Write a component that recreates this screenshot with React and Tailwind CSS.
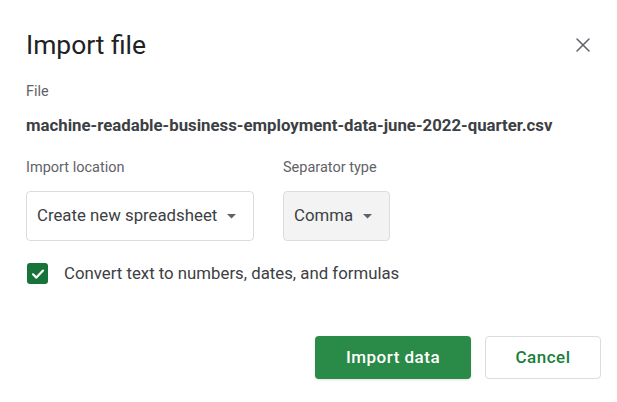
import { X } from 'lucide-react'

function Caret() {
  return (
    <svg width="9" height="5" viewBox="0 0 9 5" className="flex-shrink-0">
      <path d="M0 0 L9 0 L4.5 4.5 Z" fill="#5f6368" />
    </svg>
  )
}

export default function App() {
  return (
    <div className="w-[617px] h-[402px] bg-white font-['Roboto',sans-serif] overflow-hidden">
      <div className="pl-[26px] pr-[22px]">
        <div className="flex items-center justify-between pt-[29px]">
          <h1 className="text-[26.4px] leading-[32px] font-normal text-[#202124]">Import file</h1>
          <button className="w-6 h-6 flex items-center justify-center text-[#5f6368]">
            <X size={24} strokeWidth={1.5} />
          </button>
        </div>

        <p className="mt-[21px] text-[14.4px] leading-[20px] text-[#5f6368]">File</p>
        <p className="mt-[11px] text-[16.8px] leading-[24px] font-bold text-[#3c4043]">
          machine-readable-business-employment-data-june-2022-quarter.csv
        </p>

        <div className="mt-[21px] flex gap-[29px]">
          <div>
            <p className="text-[14.5px] leading-[20px] text-[#5f6368]">Import location</p>
            <div className="mt-[13px] w-[228px] h-[50px] border border-[#dadce0] rounded-[4px] flex items-center justify-between pl-[10px] pr-[17px]">
              <span className="text-[16.8px] text-[#3c4043]">Create new spreadsheet</span>
              <Caret />
            </div>
          </div>
          <div>
            <p className="text-[14.5px] leading-[20px] text-[#5f6368]">Separator type</p>
            <div className="mt-[13px] w-[107px] h-[50px] border border-[#dadce0] bg-[#f3f3f3] rounded-[4px] flex items-center justify-between pl-[10px] pr-[17px]">
              <span className="text-[16.8px] text-[#3c4043]">Comma</span>
              <Caret />
            </div>
          </div>
        </div>

        <div className="mt-[20px] flex items-center">
          <div className="ml-[1px] w-[21px] h-[21px] rounded-[3px] bg-[#18733b] flex items-center justify-center">
            <svg width="14" height="14" viewBox="0 0 14 14">
              <path d="M2 7.3 L5.4 10.6 L12 3.6" fill="none" stroke="white" strokeWidth="2.2" strokeLinecap="round" strokeLinejoin="round" />
            </svg>
          </div>
          <span className="ml-[16px] text-[16.8px] text-[#3c4043]">Convert text to numbers, dates, and formulas</span>
        </div>

        <div className="mt-[50px] flex justify-end gap-[14px]">
          <button className="w-[156px] h-[43px] rounded-[4px] bg-[#2a8a47] text-white text-[17px] tracking-[0.5px] font-medium shadow-sm">
            Import data
          </button>
          <button className="w-[116px] h-[43px] rounded-[4px] border border-[#dadce0] bg-white text-[#188038] text-[17px] tracking-[0.5px] font-medium -mr-[6px]">
            Cancel
          </button>
        </div>
      </div>
    </div>
  )
}
